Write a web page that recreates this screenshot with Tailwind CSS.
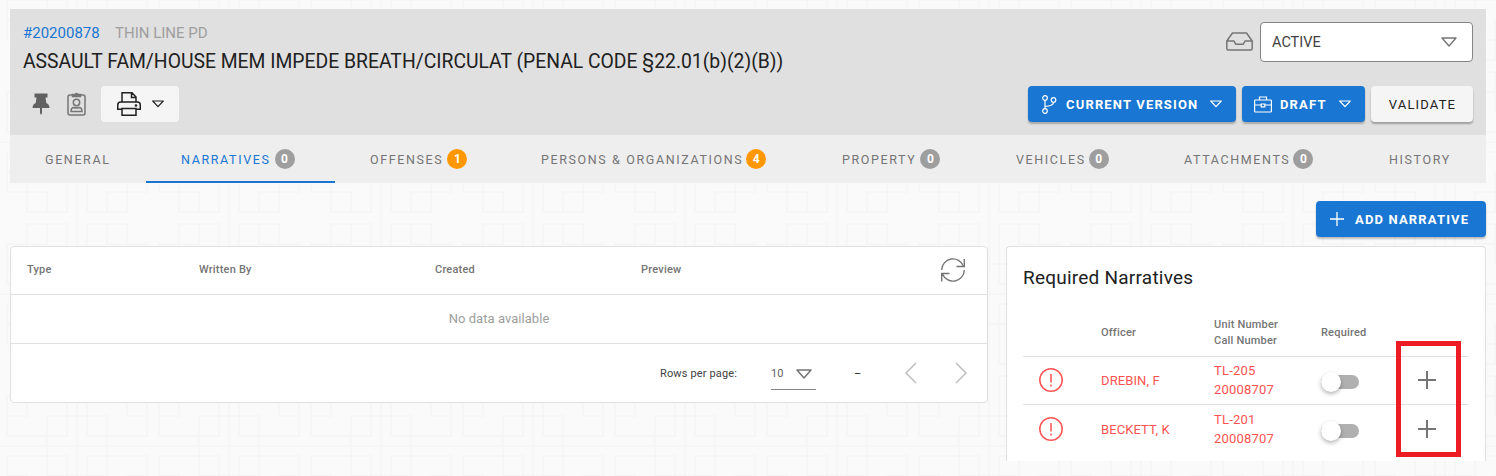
<!DOCTYPE html>
<html lang="en">
<head>
<meta charset="utf-8">
<title>Case report</title>
<script src="https://cdn.jsdelivr.net/npm/@tailwindcss/browser@4"></script>
</head>
<body class="relative h-[476px] overflow-hidden bg-[#fafafa] font-['Roboto',sans-serif] text-[#212121]">
<svg class="absolute inset-0 -z-0" width="1496" height="476" aria-hidden="true">
  <defs><pattern id="temple" width="152" height="152" patternUnits="userSpaceOnUse" patternTransform="translate(78 143)"><path fill="#f6f6f6" fill-rule="evenodd" d="M152 150v2H0v-2h28v-8H8v-20H0v-2h8V80h42v20h20v42H30v8h90v-8H80v-42h20V80h42v40h8V30h-8v40h-42V50H80V8h40V0h2v8h20v20h8V0h2v150zm-2 0v-28h-8v20h-20v8h28zM82 30v18h18V30H82zm20 18h20v20h18V30h-20V10H82v18h20v20zm0 2v18h18V50h-18zm20-22h18V10h-18v18zm-54 92v-18H50v18h18zm-20-18H28V82H10v38h20v20h38v-18H48v-20zm0-2V82H30v18h18zm-20 22H10v18h18v-18zm54 0v18h38v-20h20V82h-18v20h-20v20H82zm18-20H82v18h18v-18zm2-2h18V82h-18v18zm20 40v-18h18v18h-18zM30 0h-2v8H8v20H0v2h8v40h42V50h20V8H30V0zm20 48h18V30H50v18zm18-20H48v20H28v20H10V30h20V10h38v18zM30 50h18v18H30V50zm-2-40H10v18h18V10z"/></pattern></defs>
  <rect width="1496" height="476" fill="url(#temple)"/>
</svg>

<div class="relative ml-[10px] w-[1476px] pt-[9px]">
  <header class="flex h-[126px] justify-between bg-[#e0e0e0] pl-[13px] pr-[13px]">
    <div>
      <div class="flex h-6 items-center gap-[15px] pt-0 mt-3 text-[15px] leading-6">
        <a class="w-[77px] text-[#1976d2] whitespace-nowrap">#20200878</a>
        <span class="text-[#9e9e9e] whitespace-nowrap">THIN LINE PD</span>
      </div>
      <h1 class="mt-[1px] h-8 text-[19.340px] leading-8 whitespace-nowrap">ASSAULT FAM/HOUSE MEM IMPEDE BREATH/CIRCULAT (PENAL CODE §22.01(b)(2)(B))</h1>
      <div class="mt-2 flex h-9 items-center">
        <svg class="ml-[9px]" width="18" height="23" viewBox="0 0 18 23" fill="#616161"><path d="M2.500 .5h13v4h-2l.8 5.500q3 1.200 3.200 5H10v5l-1 2-1-2v-5H.5q.2-3.800 3.200-5l.8-5.500h-2z"/></svg>
        <svg class="ml-[17px] -mt-[2px]" width="19" height="25" viewBox="0 0 19 25" fill="none" stroke="#757575" stroke-width="1.500"><rect x="1" y="4" width="17" height="20" rx="2"/><path d="M5.500 5.500v-2H8a1.600 1.600 0 0 1 3 0h2.500v2z" fill="#757575"/><circle cx="9.500" cy="11.500" r="3.200"/><path d="M4 20.500c0-3 1.500-4 3-4q2.500 1 5 0c1.500 0 3 1 3 4z"/></svg>
        <button class="ml-[15px] flex h-9 w-[78px] items-center rounded bg-[#f5f5f5] pl-4">
          <svg width="24" height="24" viewBox="0 0 24 24" fill="none" stroke="#212121" stroke-width="1.500"><path d="M5 10V.750h10L19 5v5M14.500 1v4.500H19M5 17.200H.750V13q0-3 3-3h16.500q3 0 3 3v4.200H19M5 16.500h14v6.700H5z"/><circle cx="19" cy="13.500" r=".6"/></svg>
          <svg class="ml-[11px]" width="12" height="8" viewBox="0 0 12 8" fill="none" stroke="#212121" stroke-width="1.200" stroke-linejoin="round"><path d="M.7 1h10.600L6 6.700z"/></svg>
        </button>
      </div>
    </div>
    <div class="flex flex-col items-end pt-[13px]">
      <div class="flex items-center">
        <svg class="mr-[7px] -mt-[2px]" width="27" height="19" viewBox="0 0 27 19" fill="none" stroke="#757575" stroke-width="1.500" stroke-linejoin="round"><path d="M.8 9 6.500 1h14l5.700 8v7.500q0 1.500-1.500 1.500H2.300Q.8 18 .8 16.500zM.8 9H8l1.700 3.200h7.600L19 9h7.200"/></svg>
        <div class="flex h-10 w-[213px] items-center justify-between rounded border border-[#858585] bg-white pl-[11px] pr-[15px] text-[14.500px] text-[#424242]"><span class="pt-[2px]">ACTIVE</span>
          <svg width="16" height="10" viewBox="0 0 16 10" fill="none" stroke="#757575" stroke-width="1.400" stroke-linejoin="round"><path d="M1 1h14L8 9z"/></svg></div>
      </div>
      <div class="mt-6 flex gap-[6px] text-[13px] tracking-[1.160px]">
        <button class="flex h-9 w-[208px] items-center rounded bg-[#1976d2] pl-[13px] font-bold text-white shadow-[0_2px_2px_rgba(0,0,0,.25)]">
          <svg width="16" height="19" viewBox="0 0 16 19" fill="none" stroke="#fff" stroke-width="1.200"><circle cx="4" cy="3" r="2.300"/><circle cx="4" cy="16" r="2.300"/><circle cx="12.500" cy="5" r="2.300"/><path d="M4 5.300v8.400M12.500 7.300Q12.500 11 4 11.500"/></svg>
          <span class="ml-[9px] pt-[2px] whitespace-nowrap">CURRENT VERSION</span>
          <svg class="ml-[12px]" width="12" height="8" viewBox="0 0 12 8" fill="none" stroke="#fff" stroke-width="1.200" stroke-linejoin="round"><path d="M.7 1h10.600L6 6.700z"/></svg>
        </button>
        <button class="flex h-9 w-[123px] items-center rounded bg-[#1976d2] pl-3 font-bold text-white shadow-[0_2px_2px_rgba(0,0,0,.25)]">
          <svg width="18" height="17" viewBox="0 0 18 17" fill="none" stroke="#fff" stroke-width="1.200"><rect x=".6" y="4" width="16.800" height="12" rx=".8"/><path d="M5.500 4V1h7v3M.6 9h6.600M10.800 9h6.600M7.200 8h3.600v2.800H7.200z"/></svg>
          <span class="ml-[8px] pt-[2px]">DRAFT</span>
          <svg class="ml-[12px]" width="12" height="8" viewBox="0 0 12 8" fill="none" stroke="#fff" stroke-width="1.200" stroke-linejoin="round"><path d="M.7 1h10.600L6 6.700z"/></svg>
        </button>
        <button class="h-9 w-[102px] rounded bg-[#f5f5f5] pl-[1px] pt-[2px] shadow-[0_2px_2px_rgba(0,0,0,.3)]">VALIDATE</button>
      </div>
    </div>
  </header>

  <nav class="flex h-12 bg-[#eee] text-[12.500px] tracking-[1.620px] text-[#757575]">
    <div class="flex w-[136px] items-center pl-[35px] pt-[2px]">GENERAL</div>
    <div class="flex w-[189px] items-center border-b-2 border-[#1976d2] pl-[35px] pt-[2px] text-[#1976d2]"><span class="pt-[2px]">NARRATIVES</span><b class="ml-[4px] h-5 w-5 rounded-full bg-[#9e9e9e] text-center text-[12px] leading-5 tracking-normal text-white">0</b></div>
    <div class="flex w-[172px] items-center pl-[35px]"><span class="pt-[2px]">OFFENSES</span><b class="ml-[4px] h-5 w-5 rounded-full bg-[#ff9800] text-center text-[12px] leading-5 tracking-normal text-white">1</b></div>
    <div class="flex w-[300px] items-center pl-[34px] whitespace-nowrap"><span class="pt-[2px]">PERSONS &amp; ORGANIZATIONS</span><b class="ml-[3px] h-5 w-5 rounded-full bg-[#ff9800] text-center text-[12px] leading-5 tracking-normal text-white">4</b></div>
    <div class="flex w-[174px] items-center pl-[35px]"><span class="pt-[2px]">PROPERTY</span><b class="ml-[4px] h-5 w-5 rounded-full bg-[#9e9e9e] text-center text-[12px] leading-5 tracking-normal text-white">0</b></div>
    <div class="flex w-[168px] items-center pl-[35px]"><span class="pt-[2px]">VEHICLES</span><b class="ml-[3px] h-5 w-5 rounded-full bg-[#9e9e9e] text-center text-[12px] leading-5 tracking-normal text-white">0</b></div>
    <div class="flex w-[205px] items-center pl-[35px]"><span class="pt-[2px]">ATTACHMENTS</span><b class="ml-[3px] h-5 w-5 rounded-full bg-[#9e9e9e] text-center text-[12px] leading-5 tracking-normal text-white">0</b></div>
    <div class="flex items-center pl-[35px] pt-[2px]">HISTORY</div>
  </nav>

  <div class="flex justify-end pt-[18px]">
    <button class="flex h-9 w-[170px] items-center rounded bg-[#1976d2] pl-[14px] text-[13px] font-bold tracking-[1.160px] whitespace-nowrap text-white shadow-[0_2px_2px_rgba(0,0,0,.25)]">
      <svg class="mr-[11px]" width="14" height="14" viewBox="0 0 14 14" stroke="#fff" stroke-width="1.300"><path d="M7 0v14M0 7h14"/></svg><span class="pt-[2px]">ADD NARRATIVE</span></button>
  </div>

  <main class="mt-[9px] flex items-start justify-between">
    <section class="h-[157px] w-[978px] rounded border border-[#e0e0e0] bg-white">
      <div class="flex h-12 items-center border-b border-[#e0e0e0] pl-4 text-[11px] font-medium tracking-[.2px] text-[#757575]">
        <div class="w-[172px]">Type</div><div class="w-[236px]">Written By</div><div class="w-[206px]">Created</div><div class="w-[300px]">Preview</div>
        <svg class="-mt-[2px]" width="24" height="24" viewBox="0 0 24 24" fill="none" stroke="#757575" stroke-width="1.400"><path d="M.7 12A11.300 11.300 0 0 1 22.500 8M23.300 1v7.500H15.500M23.300 12A11.300 11.300 0 0 1 1.500 16M.7 23.500V15.500H8.500"/></svg>
      </div>
      <div class="flex h-[49px] items-center justify-center border-b border-[#e0e0e0] text-[13px] tracking-[.05px] text-[#9e9e9e]">No data available</div>
      <div class="flex h-[58px] items-center text-[11px] tracking-[.15px]">
        <span class="ml-[649px] w-[111px] pt-[2px] text-[#424242]">Rows per page:</span>
        <div class="mt-[5px] flex h-[29px] w-[45px] items-center border-b border-[#858585] pb-[2px] text-[#616161]">10
          <svg class="ml-3" width="16" height="10" viewBox="0 0 16 10" fill="none" stroke="#757575" stroke-width="1.500" stroke-linejoin="round"><path d="M1 1h14L8 9z"/></svg></div>
        <span class="ml-[38px] w-[51px] pt-[2px]">–</span>
        <svg width="12" height="22" viewBox="0 0 12 22" fill="none" stroke="#bdbdbd" stroke-width="1.500"><path d="M11 1 1 11l10 10"/></svg>
        <svg class="ml-[38px]" width="12" height="22" viewBox="0 0 12 22" fill="none" stroke="#bdbdbd" stroke-width="1.500"><path d="m1 1 10 10L1 21"/></svg>
      </div>
    </section>

    <section class="relative h-[215px] w-[480px] rounded-t border border-b-0 border-[#e0e0e0] bg-white px-4">
      <h2 class="h-[61px] text-[19px] leading-[62px] tracking-[.23px]">Required Narratives</h2>
      <div class="grid h-[49px] grid-cols-[78px_113px_107px_148px] items-center border-b border-[#e0e0e0] pt-[2px] text-[11px] font-medium leading-4 tracking-[.2px] text-[#757575]">
        <span></span><span>Officer</span><span>Unit Number<br>Call Number</span><span>Required</span>
      </div>
      <div class="grid h-12 grid-cols-[78px_113px_107px_148px] items-center border-b border-[#e0e0e0] pb-[2px] text-[13px] leading-[19px] text-[#ff5252]">
        <svg class="ml-4" width="24" height="24" viewBox="0 0 24 24" fill="none" stroke="#ff5252" stroke-width="1.500"><circle cx="12" cy="12" r="11.200"/><path d="M12 6v8.500M12 16.500v2"/></svg>
        <span class="pt-[2px] tracking-[.1px]">DREBIN, F</span><span class="tracking-[.2px]">TL-205<br>20008707</span>
        <div class="flex items-center"><span class="relative mt-1 h-[14px] w-[38px] rounded-full bg-[#b0b0b0]"><i class="absolute -top-[3px] left-0 h-5 w-5 rounded-full bg-white shadow-[0_2px_4px_rgba(0,0,0,.3)]"></i></span>
          <svg class="ml-[59px]" width="18" height="18" viewBox="0 0 18 18" stroke="#757575" stroke-width="2"><path d="M9 0v18M0 9h18"/></svg></div>
      </div>
      <div class="grid h-[50px] grid-cols-[78px_113px_107px_148px] items-center pb-[2px] text-[13px] leading-[19px] text-[#ff5252]">
        <svg class="ml-4" width="24" height="24" viewBox="0 0 24 24" fill="none" stroke="#ff5252" stroke-width="1.500"><circle cx="12" cy="12" r="11.200"/><path d="M12 6v8.500M12 16.500v2"/></svg>
        <span class="tracking-[.1px]">BECKETT, K</span><span class="tracking-[.2px]">TL-201<br>20008707</span>
        <div class="flex items-center"><span class="relative mt-1 h-[14px] w-[38px] rounded-full bg-[#b0b0b0]"><i class="absolute -top-[3px] left-0 h-5 w-5 rounded-full bg-white shadow-[0_2px_4px_rgba(0,0,0,.3)]"></i></span>
          <svg class="ml-[59px]" width="18" height="18" viewBox="0 0 18 18" stroke="#757575" stroke-width="2"><path d="M9 0v18M0 9h18"/></svg></div>
      </div>
      <div class="absolute left-[389px] top-[94px] h-[116px] w-[65px] border-[5px] border-[#ed1c24]"></div>
    </section>
  </main>
</div>
</body>
</html>
